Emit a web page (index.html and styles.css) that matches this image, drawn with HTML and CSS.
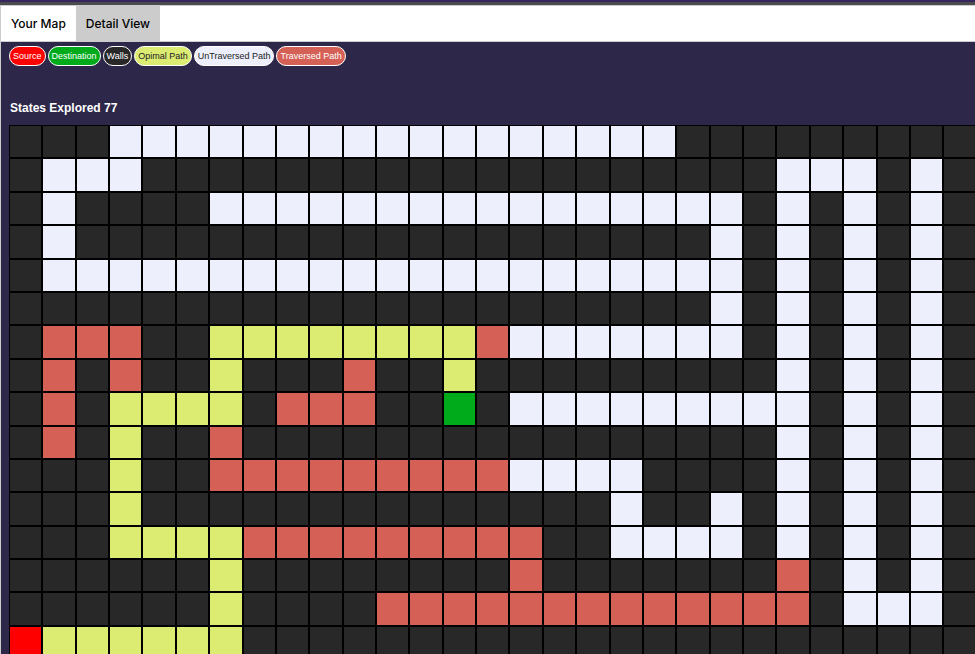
FILE: index.html
```html
<!DOCTYPE html>
<html lang="en">
<head>
<meta charset="utf-8">
<title>Detail View</title>
<link rel="stylesheet" href="styles.css">
</head>
<body>
<header class="topbar"></header>
<main class="panel">
  <nav class="tabs">
    <button class="tab" type="button">Your Map</button>
    <button class="tab tab-active" type="button">Detail View</button>
  </nav>
  <section class="content">
    <ul class="legend">
      <li class="chip source">Source</li>
      <li class="chip destination">Destination</li>
      <li class="chip wall">Walls</li>
      <li class="chip optimal">Opimal Path</li>
      <li class="chip untraversed">UnTraversed Path</li>
      <li class="chip traversed">Traversed Path</li>
    </ul>
    <h1 class="states">States Explored 77</h1>
    <div class="maze" id="maze"></div>
  </section>
</main>
<script src="maze.js"></script>
</body>
</html>
```
FILE: styles.css
```css
* { box-sizing: border-box; }

body {
  margin: 0;
  height: 100vh;
  display: flex;
  flex-direction: column;
  overflow: hidden;
  background: #2d2849;
  font-family: "Liberation Sans", Arial, sans-serif;
}

.topbar {
  flex: none;
  height: 5px;
  background: #35265f;
  border-bottom: 3px solid #4b4b4b;
}

.panel {
  flex: 1;
  min-height: 0;
  overflow: hidden;
  border-left: 1px solid #cccccc;
}

.tabs {
  display: flex;
  height: 37px;
  background: #ffffff;
  border-top: 1px solid #cccccc;
  border-bottom: 1px solid #cccccc;
}

.tab {
  border: 0;
  padding: 0 10px;
  background: transparent;
  color: #000000;
  font: 500 12px/35px Inter, sans-serif;
}

.tab-active { background: #cccccc; }

.content { padding: 4px 8px 0; }

.legend {
  display: flex;
  gap: 2px;
  margin: 0;
  padding: 0;
  list-style: none;
}

.chip {
  padding: 0 3px;
  border: 1px solid #ffffff;
  border-radius: 10px;
  color: #ffffff;
  font-size: 9px;
  line-height: 18px;
  white-space: nowrap;
}

.states {
  margin: 34px 1px 8px;
  color: #ffffff;
  font-size: 12px;
  line-height: 17px;
}

.maze {
  display: grid;
  grid-template-columns: repeat(30, 1fr);
  grid-template-rows: repeat(18, 1fr);
  width: 1001px;
  height: 601px;
}

.cell { border: 1px solid #000000; }

.source { background: #ff0000; }
.destination { background: #00ab1b; }
.wall { background: #282828; }
.optimal { background: #dceb72; }
.untraversed { background: #edeffd; }
.traversed { background: #d56156; }

.chip.optimal,
.chip.untraversed { color: #222222; }
```
FILE: maze.js
```js
const COLUMNS = 30;
const ROWS = 18;
const KINDS = {
  S: "source",
  D: "destination",
  o: "optimal",
  u: "untraversed",
  t: "traversed"
};

// Each row lists runs of open cells: [kind, first column, last column].
const runs = [
  [["u", 3, 19]],
  [["u", 1, 3], ["u", 23, 25], ["u", 27, 27]],
  [["u", 1, 1], ["u", 6, 21], ["u", 23, 23], ["u", 25, 25], ["u", 27, 27]],
  [["u", 1, 1], ["u", 21, 21], ["u", 23, 23], ["u", 25, 25], ["u", 27, 27]],
  [["u", 1, 21], ["u", 23, 23], ["u", 25, 25], ["u", 27, 27]],
  [["u", 21, 21], ["u", 23, 23], ["u", 25, 25], ["u", 27, 27]],
  [["t", 1, 3], ["o", 6, 13], ["t", 14, 14], ["u", 15, 21], ["u", 23, 23], ["u", 25, 25], ["u", 27, 27]],
  [["t", 1, 1], ["t", 3, 3], ["o", 6, 6], ["t", 10, 10], ["o", 13, 13], ["u", 23, 23], ["u", 25, 25], ["u", 27, 27]],
  [["t", 1, 1], ["o", 3, 6], ["t", 8, 10], ["D", 13, 13], ["u", 15, 23], ["u", 25, 25], ["u", 27, 27]],
  [["t", 1, 1], ["o", 3, 3], ["t", 6, 6], ["u", 23, 23], ["u", 25, 25], ["u", 27, 27]],
  [["o", 3, 3], ["t", 6, 14], ["u", 15, 18], ["u", 23, 23], ["u", 25, 25], ["u", 27, 27]],
  [["o", 3, 3], ["u", 18, 18], ["u", 21, 21], ["u", 23, 23], ["u", 25, 25], ["u", 27, 27]],
  [["o", 3, 6], ["t", 7, 15], ["u", 18, 21], ["u", 23, 23], ["u", 25, 25], ["u", 27, 27]],
  [["o", 6, 6], ["t", 15, 15], ["t", 23, 23], ["u", 25, 25], ["u", 27, 27]],
  [["o", 6, 6], ["t", 11, 23], ["u", 25, 27]],
  [["S", 0, 0], ["o", 1, 6]]
];

const maze = document.getElementById("maze");
for (let row = 0; row < ROWS; row++) {
  for (let column = 0; column < COLUMNS; column++) {
    const run = (runs[row] || []).find(([, first, last]) => column >= first && column <= last);
    const cell = document.createElement("div");
    cell.className = "cell " + (run ? KINDS[run[0]] : "wall");
    maze.append(cell);
  }
}
```
